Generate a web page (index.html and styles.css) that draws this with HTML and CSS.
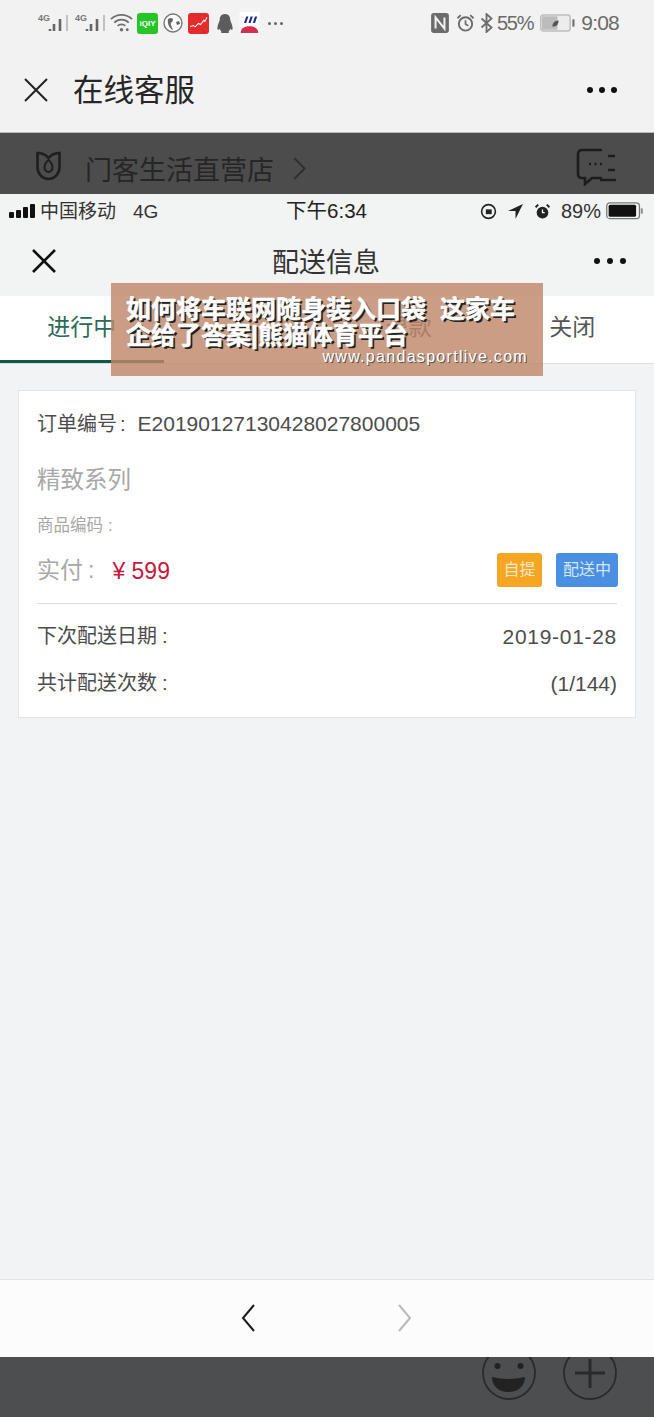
FILE: index.html
```html
<!DOCTYPE html>
<html lang="zh-CN">
<head>
    <meta charset="UTF-8">
    <title>配送信息</title>
    <link rel="stylesheet" href="styles.css">
</head>
<body>

<!-- outer phone -->
<div class="outer-top">
    <div class="phone-status">
        <div class="status-left">
            <svg class="sig" viewBox="0 0 30 20"><text x="0" y="8" class="sig-text">4G</text><path d="M12 18v-2M16 18v-7M22 18V6" stroke="#666" stroke-width="2.600"/><path d="M29 18V2" stroke="#b4b4b4" stroke-width="1.600"/></svg>
            <svg class="sig sig-two" viewBox="0 0 30 20"><text x="0" y="8" class="sig-text">4G</text><path d="M12 18v-2M16 18v-7M22 18V6" stroke="#666" stroke-width="2.600"/><path d="M29 18V2" stroke="#b4b4b4" stroke-width="1.600"/></svg>
            <svg class="wifi" viewBox="0 0 24 20"><path d="M1 6c6-6 16-6 22 0M4.500 9.500c4-4 11-4 15 0M8 13c2-2 6-2 8 0" fill="none" stroke="#6f6f6f" stroke-width="1.800"/><circle cx="12" cy="17" r="1.800" fill="#6f6f6f"/><circle cx="18" cy="17" r="1.500" fill="#6f6f6f"/></svg>
            <span class="app app-green"><span class="app-label">iQIY</span></span>
            <svg class="app-round" viewBox="0 0 20 20"><circle cx="10" cy="10" r="9" fill="#fff" stroke="#777" stroke-width="1.400"/><path d="M5 6c3-2 5-1 5 1s-3 2-2 5 2 4 2 5c-3-1-6-6-5-11zM13 9l3-1 1 3-3 1z" fill="#666"/></svg>
            <span class="app app-red"><svg viewBox="0 0 18 18"><path d="M1 12l3-1 2 1 3-3 2 1 3-4 1 1 2-4" fill="none" stroke="#fff" stroke-width="1"/></svg></span>
            <svg class="app-qq" viewBox="0 0 18 22"><path d="M9 1c4 0 5.500 3 5.500 6 0 2 2.500 5 2.500 9 0 2-1.500 2-2.500.5-.5 1.500-1 2.500-2 3 1 .5 1 1.500-.5 1.500H6c-1.500 0-1.500-1-.5-1.500-1-.5-1.500-1.500-2-3C2.500 18 1 18 1 16c0-4 2.500-7 2.500-9C3.500 4 5 1 9 1z" fill="#5c5c5c"/></svg>
            <svg class="app-bank" viewBox="0 0 18 20"><rect width="18" height="20" fill="#fff"/><path d="M4 10l2-6h2l-2 6zM8 10l2-6h2l-2 6zM12 10l2-6h2l-2 6z" fill="#1c2c8c"/><path d="M1 19c0-4 3-6 8-6s8 2 8 6z" fill="#d8304c"/></svg>
            <span class="status-more"><i></i><i></i><i></i></span>
        </div>
        <div class="status-right">
            <svg class="nfc" viewBox="0 0 16 18"><rect width="16" height="18" rx="2.500" fill="#6b6b6b"/><path d="M4 14V4l8 10V4" fill="none" stroke="#f2f2f2" stroke-width="1.800"/></svg>
            <svg class="alarm" viewBox="0 0 20 20"><circle cx="10" cy="11" r="7" fill="none" stroke="#6b6b6b" stroke-width="2"/><path d="M10 7v4l3 2M1.500 5L5 1.800M18.500 5L15 1.800" fill="none" stroke="#6b6b6b" stroke-width="1.800"/></svg>
            <svg class="bt" viewBox="0 0 12 20"><path d="M1 5.500l10 9-5 4.500V1l5 4.500-10 9" fill="none" stroke="#6b6b6b" stroke-width="1.800"/></svg>
            <span class="pct">55%</span>
            <svg class="batt" viewBox="0 0 34 17"><rect x=".7" y=".7" width="28.600" height="15.600" rx="2.500" fill="#ececec" stroke="#bdbdbd" stroke-width="1.400"/><rect x="2" y="2" width="15" height="13" fill="#bcbcbc"/><path d="M12 12c0-4 3-6 6-6 0 4-2 6-6 6z" fill="#555"/><rect x="31.500" y="5" width="2" height="7" fill="#6b6b6b"/></svg>
            <span class="clock">9:08</span>
        </div>
    </div>
    <div class="outer-head">
        <svg class="x-icon" viewBox="0 0 24 24"><path d="M1 1l22 22M23 1L1 23" stroke="#222" stroke-width="2" fill="none"/></svg>
        <span class="outer-title">在线客服</span>
        <span class="dots"><i></i><i></i><i></i></span>
    </div>
</div>

<div class="store-bar">
    <svg class="store-logo" viewBox="0 0 26 30"><path d="M2 2c4 0 8 1.500 11 5 3-3.500 7-5 11-5v14c0 7-5 12-11 12S2 23 2 16z" fill="none" stroke="#1f1f1f" stroke-width="2.600"/><path d="M13 9c3 2.500 4 5 4 7.500 0 2.500-2 4.500-4 4.500s-4-2-4-4.500C9 14 10 11.500 13 9z" fill="none" stroke="#1f1f1f" stroke-width="2"/></svg>
    <span class="store-name">门客生活直营店</span>
    <svg class="store-arrow" viewBox="0 0 12 22"><path d="M1 1l10 10L1 21" fill="none" stroke="#2e2e2e" stroke-width="1.800"/></svg>
    <svg class="store-menu" viewBox="0 0 46 38"><path d="M26 2H6C3.500 2 2 3.500 2 6v20c0 2.500 1.500 4 4 4h3v6l7-6h10" fill="none" stroke="#1d1d1d" stroke-width="2.600"/><path d="M13 16h2M18.500 16h2M24 16h2" stroke="#1d1d1d" stroke-width="2.400"/><path d="M32 8h7M32 22h7M24 32h16" stroke="#1d1d1d" stroke-width="2.600"/></svg>
</div>

<!-- inner phone -->
<div class="inner-top">
    <div class="inner-status">
        <div class="inner-left">
            <span class="bars"><i></i><i></i><i></i><i></i></span>
            <span class="carrier">中国移动</span>
            <span class="net">4G</span>
        </div>
        <div class="inner-time">下午6:34</div>
        <div class="inner-right">
            <svg class="lock" viewBox="0 0 16 16"><circle cx="8" cy="8" r="6.500" fill="none" stroke="#222" stroke-width="1.500"/><rect x="5.500" y="6" width="5.500" height="4.500" fill="#222"/></svg>
            <svg class="loc" viewBox="0 0 16 16"><path d="M15 1L1 7.500h7V15z" fill="#222"/></svg>
            <svg class="lock" viewBox="0 0 16 16"><circle cx="8" cy="9" r="5.500" fill="#222"/><path d="M1.500 4L4 1.500M14.500 4L12 1.500" stroke="#222" stroke-width="1.800"/><path d="M8 6v3h2" stroke="#fff" stroke-width="1.200" fill="none"/></svg>
            <span>89%</span>
            <svg class="inner-batt" viewBox="0 0 36 17"><rect x=".7" y=".7" width="31" height="15" rx="3" fill="none" stroke="#777" stroke-width="1.200"/><rect x="2.500" y="2.500" width="26" height="11.500" rx="1.500" fill="#111"/><rect x="33" y="6" width="1.800" height="5" fill="#888"/></svg>
        </div>
    </div>
    <div class="inner-head">
        <svg class="x-icon" viewBox="0 0 24 24"><path d="M1 1l22 22M23 1L1 23" stroke="#111" stroke-width="2.600" fill="none"/></svg>
        <span class="inner-title">配送信息</span>
        <span class="dots"><i></i><i></i><i></i></span>
    </div>
</div>

<div class="tabs">
    <div class="tab active">进行中</div>
    <div class="tab"></div>
    <div class="tab">退款</div>
    <div class="tab">关闭</div>
</div>

<div class="content">
    <div class="card">
        <div class="order-no">订单编号<span class="colon">:</span><span class="order-val">E20190127130428027800005</span></div>
        <div class="series">精致系列</div>
        <div class="code">商品编码<span class="colon">:</span></div>
        <div class="pay-row">
            <div class="paid"><span class="paid-label">实付<span class="colon">:</span></span><span class="price">¥ 599</span></div>
            <div class="badges">
                <span class="badge orange">自提</span>
                <span class="badge blue">配送中</span>
            </div>
        </div>
        <div class="info-row first"><span>下次配送日期<span class="colon">:</span></span><span class="info-val date">2019-01-28</span></div>
        <div class="info-row"><span>共计配送次数<span class="colon">:</span></span><span class="info-val">(1/144)</span></div>
    </div>
</div>

<div class="nav-bar">
    <svg class="nav-arrow" viewBox="0 0 14 28"><path d="M13 1L2 14l11 13" fill="none" stroke="#1b1b1b" stroke-width="2"/></svg>
    <svg class="nav-arrow" viewBox="0 0 14 28"><path d="M1 1l11 13L1 27" fill="none" stroke="#b9b9b9" stroke-width="2"/></svg>
</div>

<div class="bottom-bar">
    <svg class="smile" viewBox="0 0 54 44"><circle cx="27" cy="16" r="26" fill="none" stroke="#2a2a2a" stroke-width="1.800"/><circle cx="15.500" cy="9" r="3" fill="#222"/><circle cx="38.500" cy="9" r="3" fill="#222"/><path d="M10 20c11 2.500 22 2.500 33 0 0 9-7 15-16.500 15S10 29 10 20z" fill="#222"/></svg>
    <svg class="plus" viewBox="0 0 54 44"><circle cx="27" cy="16" r="26" fill="none" stroke="#2a2a2a" stroke-width="1.800"/><path d="M27 2v29M12 16h30" stroke="#2a2a2a" stroke-width="3"/></svg>
</div>

<!-- ad banner sits over the tabs -->
<div class="banner">
    <div class="banner-title">如何将车联网随身装入口袋&nbsp;&nbsp;这家车<br>企给了答案|熊猫体育平台</div>
    <div class="banner-url">www.pandasportlive.com</div>
</div>

</body>
</html>
```

FILE: styles.css
```css
* {
    box-sizing: border-box;
}

html, body {
    margin: 0;
    padding: 0;
}

body {
    width: 654px;
    height: 1417px;
    position: relative;
    overflow: hidden;
    font-family: "Liberation Sans", "Noto Sans CJK SC", sans-serif;
    background-color: #f1f3f4;
}

svg {
    display: block;
    flex: none;
}

/* outer phone */
.outer-top {
    height: 132px;
    background-color: #f2f2f2;
}

.phone-status {
    height: 45px;
    padding: 1px 35px 0 38px;
    display: flex;
    justify-content: space-between;
    align-items: center;
}

.status-left, .status-right {
    display: flex;
    align-items: center;
}

.status-left {
    gap: 5px;
}

.sig {
    width: 30px;
    height: 20px;
}

.sig-two {
    margin-left: 2px;
}

.sig-text {
    font-size: 9px;
    font-weight: bold;
    fill: #777;
}

.wifi {
    width: 23px;
    height: 20px;
}

.app {
    width: 21px;
    height: 21px;
    border-radius: 3px;
    display: flex;
    align-items: center;
    justify-content: center;
}

.wifi + .app {
    margin-left: -1px;
}

.app-green {
    background-color: #27c427;
    color: #fff;
}

.app-label {
    font-size: 8px;
    font-weight: bold;
}

.app-round {
    width: 20px;
    height: 20px;
}

.app-red {
    background-color: #e42c2c;
}

.app-red svg {
    width: 19px;
    height: 19px;
}

.app-qq {
    width: 18px;
    height: 21px;
    margin-left: 2px;
}

.app-bank {
    width: 21px;
    height: 22px;
}

.status-more {
    display: flex;
    gap: 3px;
    margin-left: 3px;
}

.status-more i {
    width: 3px;
    height: 3px;
    border-radius: 50%;
    background-color: #666;
}

.status-right {
    color: #6b6b6b;
    font-size: 20px;
}

.nfc {
    width: 18px;
    height: 20px;
}

.alarm {
    width: 19px;
    height: 20px;
    margin-left: 7px;
}

.bt {
    width: 13px;
    height: 20px;
    margin-left: 5px;
}

.pct {
    margin-left: 4px;
    letter-spacing: -1.200px;
}

.batt {
    width: 35px;
    height: 18px;
    margin-left: 7px;
}

.clock {
    margin-left: 6px;
    font-size: 21px;
    letter-spacing: -.8px;
}

.outer-head {
    height: 87px;
    padding: 3px 37px 0 24px;
    display: flex;
    align-items: center;
}

.outer-head .x-icon {
    width: 24px;
    height: 26px;
}

.outer-title {
    margin-left: 25px;
    margin-top: -4px;
    font-size: 30.500px;
    color: #262626;
}

.dots {
    margin-left: auto;
    display: flex;
    gap: 6px;
}

.dots i {
    width: 6px;
    height: 6px;
    border-radius: 50%;
    background-color: #111;
}

.store-bar {
    height: 62px;
    background-color: #4c4c4c;
    border-top: 1px solid #bbb;
    padding: 9px 32px 0 35px;
    display: flex;
    align-items: center;
}

.store-logo {
    width: 27px;
    height: 30px;
    margin-top: -5px;
}

.store-name {
    margin-left: 23px;
    font-size: 27px;
    color: #262626;
}

.store-arrow {
    width: 13px;
    height: 23px;
    margin-left: 19px;
}

.store-menu {
    width: 46px;
    height: 38px;
    margin-left: auto;
    margin-top: -2px;
}

/* inner phone */
.inner-top {
    height: 102px;
    background-color: #f2f3f3;
}

.inner-status {
    height: 34px;
    padding: 0 10px 0 9px;
    display: grid;
    grid-template-columns: 1fr auto 1fr;
    align-items: center;
    font-size: 19px;
    color: #333;
}

.inner-left, .inner-right {
    display: flex;
    align-items: center;
}

.inner-right {
    justify-content: flex-end;
    gap: 10px;
    font-size: 20px;
}

.bars {
    display: flex;
    align-items: flex-end;
    gap: 2px;
    margin-right: 5px;
}

.bars i {
    width: 5px;
    background-color: #111;
    border-radius: 1px;
}

.bars i:nth-child(1) { height: 6px; }
.bars i:nth-child(2) { height: 8px; }
.bars i:nth-child(3) { height: 11px; }
.bars i:nth-child(4) { height: 14px; }

.carrier {
    padding-bottom: 4px;
}

.net {
    margin-left: 17px;
    padding-top: 1px;
}

.inner-time {
    font-size: 20.500px;
    color: #222;
    padding-bottom: 4px;
}

.lock, .loc {
    width: 17px;
    height: 17px;
}

.inner-batt {
    width: 38px;
    height: 18px;
    margin-left: -5px;
}

.inner-head {
    height: 68px;
    padding: 0 28px 2px 32px;
    display: flex;
    align-items: center;
    position: relative;
}

.inner-head .x-icon {
    width: 24px;
    height: 24px;
}

.inner-head .dots {
    gap: 7px;
}

.inner-title {
    position: absolute;
    left: 0;
    right: 2px;
    margin-top: -2px;
    text-align: center;
    font-size: 27px;
    color: #333;
}

.tabs {
    height: 68px;
    background-color: #fff;
    border-bottom: 1px solid #ddd;
    display: grid;
    grid-template-columns: repeat(4, 1fr);
}

.tab {
    text-align: center;
    font-size: 23px;
    line-height: 62px;
    color: #555;
}

.tab.active {
    color: #2b6a58;
    border-bottom: 3px solid #0d5a44;
    height: 67px;
}

/* order card */
.content {
    height: 915px;
    padding: 26px 18px 0;
}

.card {
    height: 328px;
    background-color: #fff;
    border: 1px solid #e2e4e6;
    padding: 0 18px;
}

.colon {
    margin-left: 5px;
}

.order-no {
    height: 65px;
    line-height: 66px;
    font-size: 20px;
    color: #4c4c4c;
}

.order-no .colon {
    margin-left: 3px;
}

.order-val {
    font-size: 21px;
    margin-left: 12px;
}

.series {
    font-size: 23.500px;
    color: #a8a8a8;
    line-height: 34px;
    margin-top: 7px;
}

.code {
    font-size: 16.500px;
    color: #a8a8a8;
    line-height: 24px;
    margin-top: 16px;
}

.pay-row {
    display: flex;
    justify-content: space-between;
    align-items: center;
    margin-top: 15px;
    height: 52px;
    padding-bottom: 16px;
    border-bottom: 1px solid #dcdcdc;
}

.paid {
    display: flex;
    align-items: center;
}

.paid-label {
    font-size: 23px;
    color: #a8a8a8;
    margin-bottom: 4px;
}

.price {
    font-size: 23px;
    color: #c8173c;
    margin-left: 18px;
    margin-top: 4px;
}

.badges {
    display: flex;
    gap: 14px;
    margin-right: -1px;
}

.badge {
    height: 34px;
    border-radius: 3px;
    font-size: 16px;
    line-height: 34px;
    color: #d8e6f6;
    text-align: center;
}

.orange {
    width: 45px;
    background-color: #f5a623;
    color: #fbe6c4;
}

.blue {
    width: 62px;
    background-color: #4a90e2;
}

.info-row {
    display: flex;
    justify-content: space-between;
    font-size: 20px;
    color: #4c4c4c;
    line-height: 47px;
}

.info-row.first {
    margin-top: 9px;
}

.info-val {
    font-size: 21px;
}

.date {
    letter-spacing: .7px;
}

/* bottom */
.nav-bar {
    height: 78px;
    background-color: #fcfcfd;
    border-top: 1px solid #e4e4e4;
    padding: 0 242px 2px 241px;
    display: flex;
    justify-content: space-between;
    align-items: center;
}

.nav-arrow {
    width: 14px;
    height: 28px;
}

.bottom-bar {
    height: 60px;
    background-color: #4d4e50;
    padding-right: 37px;
    display: flex;
    justify-content: flex-end;
    gap: 27px;
}

.smile, .plus {
    width: 54px;
    height: 44px;
}

/* banner */
.banner {
    position: absolute;
    left: 111px;
    top: 283px;
    width: 432px;
    height: 93px;
    background-color: rgba(190, 135, 105, 0.82);
    padding: 13px 15px 0;
}

.banner-title {
    font-size: 25px;
    line-height: 26px;
    font-weight: bold;
    color: #fff;
    white-space: nowrap;
    -webkit-text-stroke: .5px #fff;
    text-shadow: 2px 2px 0 #222;
}

.banner-url {
    font-size: 16px;
    line-height: 18px;
    letter-spacing: 1.300px;
    color: #fff;
    text-align: right;
    text-shadow: 1px 1px 0 #555;
}
```
